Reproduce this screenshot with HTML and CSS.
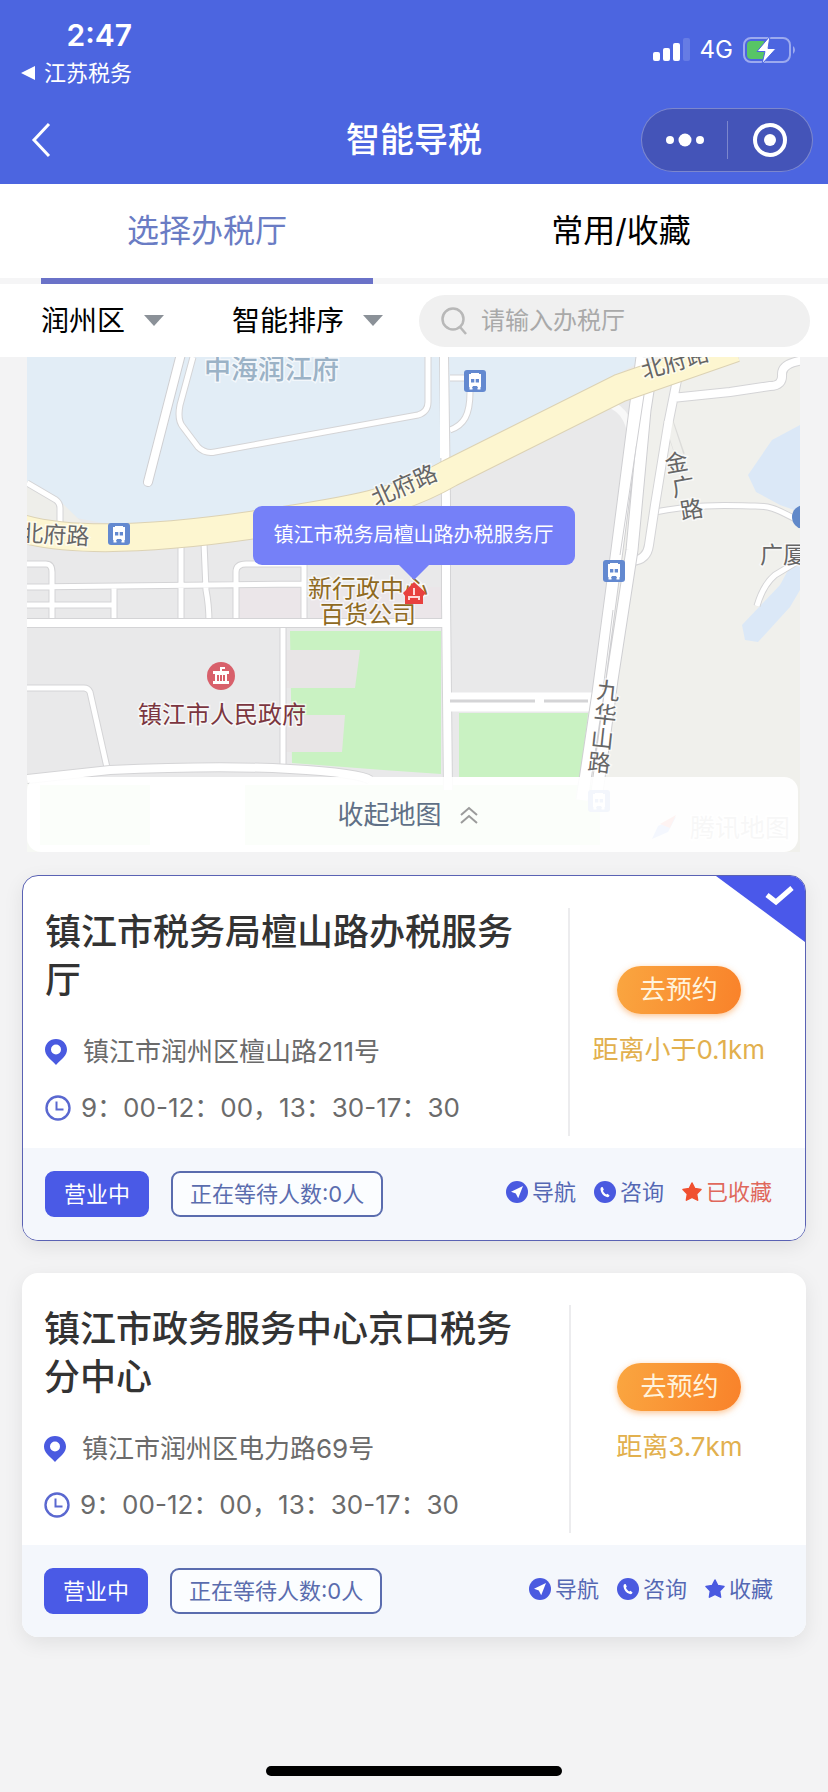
FILE: index.html
```html
<!DOCTYPE html>
<html lang="zh-CN">
<head>
    <meta charset="UTF-8">
    <meta name="viewport" content="width=device-width, initial-scale=1.0">
    <title>智能导税</title>
    <link rel="stylesheet" href="styles.css">
</head>
<body>
    <!-- shared icons -->
    <svg class="icon-defs" xmlns="http://www.w3.org/2000/svg">
        <symbol id="icon-pin" viewBox="0 0 22 26">
            <path fill-rule="evenodd" d="M11 0C4.800 0 0 4.800 0 10.600 0 16.500 4.500 19.500 11 26 17.500 19.500 22 16.500 22 10.600 22 4.800 17.200 0 11 0zM11 5.500a5 5 0 1 1 0 10 5 5 0 0 1 0-10z"></path>
        </symbol>
        <symbol id="icon-clock" viewBox="0 0 26 26">
            <circle cx="13" cy="13" r="11.500" fill="none" stroke="currentColor" stroke-width="2.400"></circle>
            <path d="M11.500 6.500V14.500H18.500" fill="none" stroke="currentColor" stroke-width="2"></path>
        </symbol>
        <symbol id="icon-nav" viewBox="0 0 22 22">
            <circle cx="11" cy="11" r="11"></circle>
            <path d="M17 5L12.200 17.200 9.800 12.600 5 10.800z" fill="#fff"></path>
        </symbol>
        <symbol id="icon-phone" viewBox="0 0 22 22">
            <circle cx="11" cy="11" r="11"></circle>
            <path d="M7.200 6.200L8.600 6 9.800 8.600 9 9.800C9.600 11.400 10.700 12.600 12.200 13.400L13.500 12.800 15.600 14.400 15 15.600C14.400 16.300 13.400 16.300 12.200 15.800 9 14.600 6.800 11.600 6.500 8.400 6.500 7.300 6.700 6.600 7.200 6.200z" fill="#fff"></path>
        </symbol>
        <symbol id="icon-star" viewBox="0 0 20 20">
            <path d="M10 1L12.800 6.600 19 7.500 14.600 11.900 15.600 18.200 10 15.300 4.400 18.200 5.400 11.900 1 7.500 7.200 6.600z" stroke="currentColor" stroke-width="1.500" stroke-linejoin="round"></path>
        </symbol>
        <symbol id="icon-bus" viewBox="0 0 22 22">
            <rect width="22" height="22" rx="3" fill="#6389d0"></rect>
            <path d="M5 4h12v13H5z" fill="#fff"></path>
            <path d="M7 3h8v2H7zM5.500 17h3v2.500h-3zM13.500 17h3v2.500h-3z" fill="#fff"></path>
            <path d="M7 9h3.300v3.500H7zM11.700 9H15v3.500h-3.300zM9 16h4l1 2H8z" fill="#6389d0"></path>
        </symbol>
    </svg>

    <div class="page">
        <header class="header">
            <div class="status-bar">
                <div class="status-left">
                    <span class="time">2:47</span>
                    <a class="back-app" href="#">
                        <svg width="15" height="14" viewBox="0 0 15 14"><path d="M14 0V14L0 7z" fill="#fff"></path></svg>
                        江苏税务
                    </a>
                </div>
                <div class="status-right">
                    <svg width="37" height="24" viewBox="0 0 37 24" fill="#fff">
                        <rect x="0" y="14" width="7" height="9" rx="2"></rect>
                        <rect x="10" y="10" width="7" height="13" rx="2"></rect>
                        <rect x="20" y="5" width="7" height="18" rx="2"></rect>
                        <rect x="30" y="0" width="7" height="23" rx="2" opacity="0.15"></rect>
                    </svg>
                    <span class="network">4G</span>
                    <svg width="54" height="28" viewBox="0 0 54 28">
                        <rect x="1" y="2" width="46" height="24" rx="7" fill="none" stroke="#fff" stroke-opacity="0.45" stroke-width="2"></rect>
                        <path d="M50 10a5 5 0 0 1 0 8z" fill="#fff" opacity="0.45"></path>
                        <rect x="4" y="5" width="19" height="18" rx="4" fill="#57c566"></rect>
                        <path d="M27 0L14 15.500H22L19 28 33 12.500H25z" fill="#fff" stroke="#4c65e0" stroke-width="1"></path>
                    </svg>
                </div>
            </div>
            <div class="nav-bar">
                <button class="back-button" aria-label="返回">
                    <svg width="20" height="36" viewBox="0 0 20 36"><path d="M18 2L3 18 18 34" fill="none" stroke="#fff" stroke-width="3"></path></svg>
                </button>
                <h1>智能导税</h1>
                <div class="capsule">
                    <button aria-label="更多">
                        <svg width="38" height="14" viewBox="0 0 38 14" fill="#fff"><circle cx="4" cy="7" r="4"></circle><circle cx="19" cy="7" r="6.500"></circle><circle cx="34" cy="7" r="4"></circle></svg>
                    </button>
                    <button aria-label="关闭">
                        <svg width="36" height="36" viewBox="0 0 36 36"><circle cx="18" cy="18" r="15" fill="none" stroke="#fff" stroke-width="4"></circle><circle cx="18" cy="18" r="6" fill="#fff"></circle></svg>
                    </button>
                </div>
            </div>
        </header>

        <nav class="tabs">
            <button class="tab active">选择办税厅</button>
            <button class="tab">常用/收藏</button>
        </nav>

        <div class="filters">
            <div class="filter">
                <select aria-label="地区"><option>润州区</option></select>
                <svg width="20" height="11" viewBox="0 0 20 11"><path d="M0 0H20L10 11z" fill="#8b9198"></path></svg>
            </div>
            <div class="filter">
                <select aria-label="排序"><option>智能排序</option></select>
                <svg width="20" height="11" viewBox="0 0 20 11"><path d="M0 0H20L10 11z" fill="#8b9198"></path></svg>
            </div>
            <label class="search">
                <svg width="28" height="30" viewBox="0 0 28 30"><circle cx="12" cy="13" r="10.500" fill="none" stroke="#b8b8b8" stroke-width="2.500"></circle><path d="M19 21L25 28" stroke="#b8b8b8" stroke-width="2.500"></path></svg>
                <input type="text" placeholder="请输入办税厅" aria-label="搜索办税厅">
            </label>
        </div>

        <main class="content">
            <section class="map">
                <svg class="map-canvas" viewBox="27 357 773 495" xmlns="http://www.w3.org/2000/svg">
                    <defs>
                        <path id="lanes" d="M193 357L180 405Q177 420 183 427L198 447Q205 454 215 452L418 415Q428 412 428 402V357M27 483L56 500Q60 503 60 508V525M27 564H46Q52 564 52 572V623M27 587L302 584M27 605H113M114 587V623M181 545V623M204 543L206 590Q209 605 209 623M236 623V572Q236 564 246 564H304V623M283 623V770M27 688H84Q88 688 90 692L108 772M450 378H466M470 392C470 415 464 425 450 430M655 512C700 503 735 506 755 506S780 512 800 521M800 560L775 575Q763 585 757 606"></path>
                        <path id="streets" d="M27 623H446M444 357L446 500 446 600 448 790M27 779L110 770Q220 765 290 769T370 780M680 357L677 380 668 425 655 505 649 545Q647 560 632 561M672 398L730 392 770 386Q783 386 782 374 782 363 805 360"></path>
                        <path id="dead-end" d="M182 350L148 482"></path>
                        <path id="jiuhuashan" d="M642 357L635 410 617 550 598 693 582 800M652 365L645 410 632 550 612 680 596 800"></path>
                        <path id="beifu" d="M20 528C70 543 150 540 253 525S400 502 450 473L530 433 620 388 735 348"></path>
                    </defs>

                    <rect x="27" y="357" width="773" height="495" fill="#e9e9ea"></rect>
                    <!-- land east of the main road -->
                    <path d="M640 357H800V852H560L605 640 630 480z" fill="#f0f0ec"></path>
                    <path d="M27 357H650L530 420 440 465 360 500 253 515 130 528 60 515 27 500z" fill="#e2edf6"></path>
                    <path d="M27 481L62 503 90 530 27 530z" fill="#eeeeea"></path>
                    <path d="M236 587H302V620H237zM310 587H443V620H310z" fill="#ebe6e9"></path>
                    <path d="M800 425L772 440 748 475 756 492 780 505 800 512zM800 548L780 585 742 625 745 640 758 642 790 607 800 590z" fill="#dbe8f7"></path>
                    <!-- parks -->
                    <path d="M290 631H441V774L383 770 292 763z" fill="#c9f2c2"></path>
                    <path d="M286 650H360L355 688H286zM286 715H345L342 752H286z" fill="#e8e5e6"></path>
                    <path d="M459 713H588L578 800H459z" fill="#c9f2c2"></path>
                    <path d="M27 777H580V852H27z" fill="#f6f8f4"></path>
                    <path d="M40 785H150V845H40zM245 785H600V845H245z" fill="#c9f2c2"></path>

                    <!-- every road has a wider stroke below it for the edge -->
                    <g fill="none" stroke-linejoin="round">
                        <use href="#lanes" stroke="#d4d4d6" stroke-width="7"></use>
                        <use href="#lanes" stroke="#fff" stroke-width="5"></use>
                        <use href="#streets" stroke="#d4d4d6" stroke-width="10"></use>
                        <use href="#dead-end" stroke="#cfcfd2" stroke-width="10" stroke-linecap="round"></use>
                        <path d="M668 420L680 455" stroke="#dcdcda" stroke-width="10"></path>
                        <path d="M668 420L680 457" stroke="#f0f0ec" stroke-width="8"></path>
                        <use href="#streets" stroke="#fff" stroke-width="8"></use>
                        <use href="#dead-end" stroke="#fff" stroke-width="8" stroke-linecap="round"></use>
                        <path d="M450 702H592" stroke="#fff" stroke-width="19"></path>
                        <path d="M450 701H535M544 701H588" stroke="#d4d4d6" stroke-width="3"></path>
                        <path d="M602 403Q628 405 632 440" stroke="#f8f8f8" stroke-width="7"></path>
                        <use href="#jiuhuashan" stroke="#cfcfd2" stroke-width="13"></use>
                        <use href="#jiuhuashan" stroke="#fff" stroke-width="11"></use>
                        <path d="M644 395L620 555M613 610L603 690" stroke="#cfcfd2" stroke-width="1"></path>
                        <use href="#beifu" stroke="#dcd2b4" stroke-width="29"></use>
                        <use href="#beifu" stroke="#fdf6d0" stroke-width="27"></use>
                        <path d="M444 357V458" stroke="#fff" stroke-width="8"></path>
                    </g>

                    <use href="#icon-bus" x="108" y="523" width="22" height="22"></use>
                    <use href="#icon-bus" x="464" y="370" width="22" height="22"></use>
                    <use href="#icon-bus" x="603" y="560" width="22" height="22"></use>
                    <use href="#icon-bus" x="588" y="790" width="22" height="22"></use>
                    <circle cx="804" cy="517" r="12" fill="#6189c9"></circle>

                    <!-- government office -->
                    <circle cx="221" cy="676" r="14" fill="#d8606b"></circle>
                    <path d="M213 671H220V667H225V669H222V671H229V674H227V681H229V684H213V681H215V674H213zM217 675V681H219V675zM220 675V681H222V675zM223 675V681H225V675z" fill="#fff" fill-rule="evenodd"></path>

                    <g class="road-name">
                        <text x="20" y="541" transform="rotate(3 20 541)">北府路</text>
                        <text x="376" y="507" transform="rotate(-24 376 507)">北府路</text>
                        <text x="644" y="379" transform="rotate(-16 644 379)">北府路</text>
                        <text x="665" y="471" transform="rotate(-10 676 463)">金</text>
                        <text x="672" y="495" transform="rotate(-10 683 487)">广</text>
                        <text x="680" y="518" transform="rotate(-10 691 509)">路</text>
                        <text x="597" y="699" transform="rotate(6 608 690)">九</text>
                        <text x="594" y="723" transform="rotate(6 605 714)">华</text>
                        <text x="591" y="747" transform="rotate(6 602 738)">山</text>
                        <text x="588" y="771" transform="rotate(6 599 762)">路</text>
                        <text x="760" y="563">广厦</text>
                    </g>
                    <text class="area-name" x="204" y="379">中海润江府</text>
                    <text class="shop-name" x="308" y="597">新行政中心</text>
                    <text class="shop-name" x="320" y="623">百货公司</text>
                    <text class="gov-name" x="138" y="723">镇江市人民政府</text>

                    <!-- current hall marker -->
                    <path d="M414 582L426 593 423 596V604H405V596L403 593z" fill="#e8413f"></path>
                    <path d="M414 588V595M409 600V597H419V600" fill="none" stroke="#ffd9d9" stroke-width="2"></path>

                    <path d="M652 839L658 826 676 817 668 832z" fill="#6f9df0"></path>
                    <path d="M660 824L676 815 670 828z" fill="#ef6a5c"></path>
                    <text class="map-brand" x="690" y="837">腾讯地图</text>
                </svg>
                <div class="callout">镇江市税务局檀山路办税服务厅</div>
                <button class="map-toggle">
                    收起地图
                    <svg width="18" height="18" viewBox="0 0 18 18" fill="none" stroke="#9b9b9b" stroke-width="2"><path d="M1 9L9 2 17 9M1 17L9 10 17 17"></path></svg>
                </button>
            </section>

            <article class="card selected">
                <div class="card-body">
                    <div class="info">
                        <h2>镇江市税务局檀山路办税服务厅</h2>
                        <p class="address"><svg width="22" height="26"><use href="#icon-pin"></use></svg>镇江市润州区檀山路211号</p>
                        <p class="hours"><svg width="26" height="26"><use href="#icon-clock"></use></svg>9：00-12：00，13：30-17：30</p>
                    </div>
                    <div class="booking">
                        <button class="book-button">去预约</button>
                        <p class="distance">距离小于0.1km</p>
                    </div>
                </div>
                <div class="card-footer">
                    <span class="badge open">营业中</span>
                    <span class="badge waiting">正在等待人数:0人</span>
                    <div class="actions">
                        <a href="#"><svg width="22" height="22"><use href="#icon-nav"></use></svg>导航</a>
                        <a href="#"><svg width="22" height="22"><use href="#icon-phone"></use></svg>咨询</a>
                        <a class="saved" href="#"><svg width="20" height="20"><use href="#icon-star"></use></svg>已收藏</a>
                    </div>
                </div>
                <svg class="corner" width="89" height="66" viewBox="0 0 89 66">
                    <path d="M0 0H89V66z" fill="#4a58ea"></path>
                    <path d="M51 19L60 26 76 12" fill="none" stroke="#fff" stroke-width="5"></path>
                </svg>
            </article>

            <article class="card">
                <div class="card-body">
                    <div class="info">
                        <h2>镇江市政务服务中心京口税务分中心</h2>
                        <p class="address"><svg width="22" height="26"><use href="#icon-pin"></use></svg>镇江市润州区电力路69号</p>
                        <p class="hours"><svg width="26" height="26"><use href="#icon-clock"></use></svg>9：00-12：00，13：30-17：30</p>
                    </div>
                    <div class="booking">
                        <button class="book-button">去预约</button>
                        <p class="distance">距离3.7km</p>
                    </div>
                </div>
                <div class="card-footer">
                    <span class="badge open">营业中</span>
                    <span class="badge waiting">正在等待人数:0人</span>
                    <div class="actions">
                        <a href="#"><svg width="22" height="22"><use href="#icon-nav"></use></svg>导航</a>
                        <a href="#"><svg width="22" height="22"><use href="#icon-phone"></use></svg>咨询</a>
                        <a href="#"><svg width="20" height="20"><use href="#icon-star"></use></svg>收藏</a>
                    </div>
                </div>
            </article>
        </main>

        <div class="home-indicator"></div>
    </div>
</body>
</html>
```

FILE: styles.css
```css
* {
    margin: 0;
    padding: 0;
    box-sizing: border-box;
}

body {
    font-family: Inter, "Noto Sans CJK SC", sans-serif;
    background-color: #f3f3f4;
    color: #111;
}

button, input, select {
    font-family: inherit;
    border: none;
    background: none;
    cursor: pointer;
}

a {
    text-decoration: none;
}

svg {
    display: block;
    flex-shrink: 0;
}

.icon-defs {
    position: absolute;
    width: 0;
    height: 0;
}

.page {
    display: flex;
    flex-direction: column;
    min-height: 100vh;
}

/* Header */
.header {
    background-color: #4c65e0;
    color: #fff;
}

.status-bar {
    display: flex;
    justify-content: space-between;
    align-items: center;
    height: 96px;
    padding: 8px 31px 0 21px;
}

.status-left {
    display: flex;
    flex-direction: column;
    gap: 6px;
}

.time {
    align-self: flex-end;
    font-size: 30px;
    line-height: 36px;
    font-weight: 600;
}

.back-app {
    display: flex;
    align-items: center;
    gap: 8px;
    color: #fff;
    font-size: 22px;
    line-height: 28px;
}

.status-right {
    display: flex;
    align-items: center;
    gap: 10px;
    padding-bottom: 4px;
}

.network {
    font-size: 24px;
    line-height: 28px;
}

.nav-bar {
    display: grid;
    grid-template-columns: 1fr auto 1fr;
    align-items: center;
    height: 88px;
    padding: 0 15px;
}

.back-button {
    justify-self: start;
    padding: 8px 16px;
}

.nav-bar h1 {
    font-size: 34px;
    line-height: 44px;
    font-weight: 500;
}

.capsule {
    justify-self: end;
    display: flex;
    align-items: center;
    height: 64px;
    border: 1px solid rgba(255, 255, 255, 0.3);
    border-radius: 32px;
    background-color: #4454b8;
}

.capsule button {
    display: flex;
    justify-content: center;
    align-items: center;
    width: 85px;
    height: 38px;
}

.capsule button + button {
    border-left: 1px solid rgba(255, 255, 255, 0.3);
}

/* Tabs */
.tabs {
    display: flex;
    background-color: #fff;
    border-bottom: 6px solid #f5f5f6;
}

.tab {
    position: relative;
    flex: 1;
    height: 94px;
    font-size: 32px;
    line-height: 40px;
    color: #000;
}

.tab.active {
    color: #6a7cc4;
}

.tab.active::after {
    content: "";
    position: absolute;
    left: 10%;
    right: 10%;
    bottom: -6px;
    height: 6px;
    background-color: #6a72c8;
}

/* Filters */
.filters {
    display: flex;
    align-items: center;
    height: 73px;
    padding: 0 18px 0 41px;
    background-color: #fff;
}

.filter {
    display: flex;
    align-items: center;
    gap: 18px;
}

.filter + .filter {
    margin: 0 36px 0 68px;
}

.filter select {
    appearance: none;
    font-size: 28px;
    line-height: 40px;
    color: #000;
}

.search {
    flex: 1;
    display: flex;
    align-items: center;
    gap: 12px;
    min-width: 0;
    height: 52px;
    padding: 0 22px;
    border-radius: 26px;
    background-color: #f0f0f0;
}

.search input {
    flex: 1;
    min-width: 0;
    font-size: 24px;
    line-height: 32px;
    outline: none;
}

.search input::placeholder {
    color: #a9a9a9;
}

/* Map */
.content {
    padding: 0 22px;
}

.map {
    position: relative;
    margin: 0 6px 23px 5px;
    overflow: hidden;
}

.map-canvas {
    width: 100%;
    height: auto;
}

.map text {
    stroke: #fff;
    stroke-width: 3px;
    stroke-opacity: 0.6;
    paint-order: stroke;
}

.road-name {
    font-size: 23px;
    fill: #666;
}

.area-name {
    font-size: 27px;
    font-weight: 500;
    fill: #9bb2c6;
}

.shop-name {
    font-size: 24px;
    fill: #8f6a22;
}

.gov-name {
    font-size: 24px;
    fill: #7b3640;
}

.map-brand {
    font-size: 25px;
    fill: #999;
}

.callout {
    position: absolute;
    left: 50%;
    top: 30%;
    transform: translateX(-50%);
    padding: 14px 21px 15px;
    border-radius: 9px;
    background-color: #7580f8;
    color: #fff;
    font-size: 20px;
    line-height: 30px;
    white-space: nowrap;
}

.callout::after {
    content: "";
    position: absolute;
    left: 50%;
    top: 100%;
    margin-left: -15px;
    border: 15px solid transparent;
    border-top-color: #7580f8;
    border-bottom: none;
}

.map-toggle {
    position: absolute;
    left: 0;
    right: 2px;
    bottom: 0;
    display: flex;
    justify-content: center;
    align-items: center;
    gap: 18px;
    height: 75px;
    padding-right: 10px;
    border-radius: 14px;
    background-color: rgba(255, 255, 255, 0.92);
    color: #5f7086;
    font-size: 26px;
    line-height: 36px;
}

/* Cards */
.card {
    position: relative;
    margin-bottom: 32px;
    border-radius: 16px;
    background-color: #fff;
    box-shadow: 0 6px 20px rgba(0, 0, 0, 0.08);
    overflow: hidden;
}

.card.selected {
    border: 1px solid #5a62b4;
}

.card-body {
    display: grid;
    grid-template-columns: 7fr 3fr;
    padding: 32px 0 12px;
}

.info {
    padding: 0 48px 10px 22px;
    border-right: 2px solid #ececee;
}

.info h2 {
    margin-bottom: 30px;
    font-size: 36px;
    line-height: 48px;
    font-weight: 500;
    color: #333;
}

.address, .hours {
    display: flex;
    align-items: center;
    font-size: 26px;
    line-height: 36px;
    color: #6b6b6b;
}

.address {
    gap: 16px;
    margin-bottom: 20px;
}

.hours {
    gap: 10px;
}

.info svg {
    color: #5a68d0;
    fill: #4a5ae0;
}

.booking {
    display: flex;
    flex-direction: column;
    align-items: center;
    padding: 58px 18px 0 0;
}

.book-button {
    height: 48px;
    margin-bottom: 18px;
    padding: 0 23px;
    border-radius: 24px;
    background: linear-gradient(100deg, #faa640, #f9822a);
    box-shadow: 0 2px 6px rgba(250, 140, 40, 0.5);
    color: #fff3dc;
    font-size: 26px;
    line-height: 36px;
}

.distance {
    font-size: 26px;
    line-height: 36px;
    color: #e2b04e;
    white-space: nowrap;
}

.card-footer {
    display: flex;
    align-items: center;
    gap: 22px;
    height: 92px;
    padding: 0 33px 0 22px;
    background-color: #f4f7fc;
}

.badge {
    padding: 6px 17px;
    border: 2px solid #4a5ae6;
    border-radius: 9px;
    font-size: 22px;
    line-height: 30px;
    white-space: nowrap;
}

.badge.open {
    background-color: #4a5ae6;
    color: #fff;
}

.badge.waiting {
    border-color: #5a6cae;
    background-color: #fbfdff;
    color: #5a6cae;
}

.actions {
    display: flex;
    gap: 18px;
    margin-left: auto;
    padding-bottom: 4px;
}

.actions a {
    display: flex;
    align-items: center;
    gap: 4px;
    color: #5468b4;
    font-size: 22px;
    line-height: 30px;
    white-space: nowrap;
}

.actions svg {
    color: #4a5ae0;
    fill: #4a5ae0;
}

.actions .saved {
    color: #e0685c;
}

.actions .saved svg {
    color: #f05030;
    fill: #f05030;
}

.corner {
    position: absolute;
    top: 0;
    right: 0;
}

.home-indicator {
    width: 296px;
    height: 10px;
    margin: auto auto 16px;
    border-radius: 5px;
    background-color: #000;
}
```
